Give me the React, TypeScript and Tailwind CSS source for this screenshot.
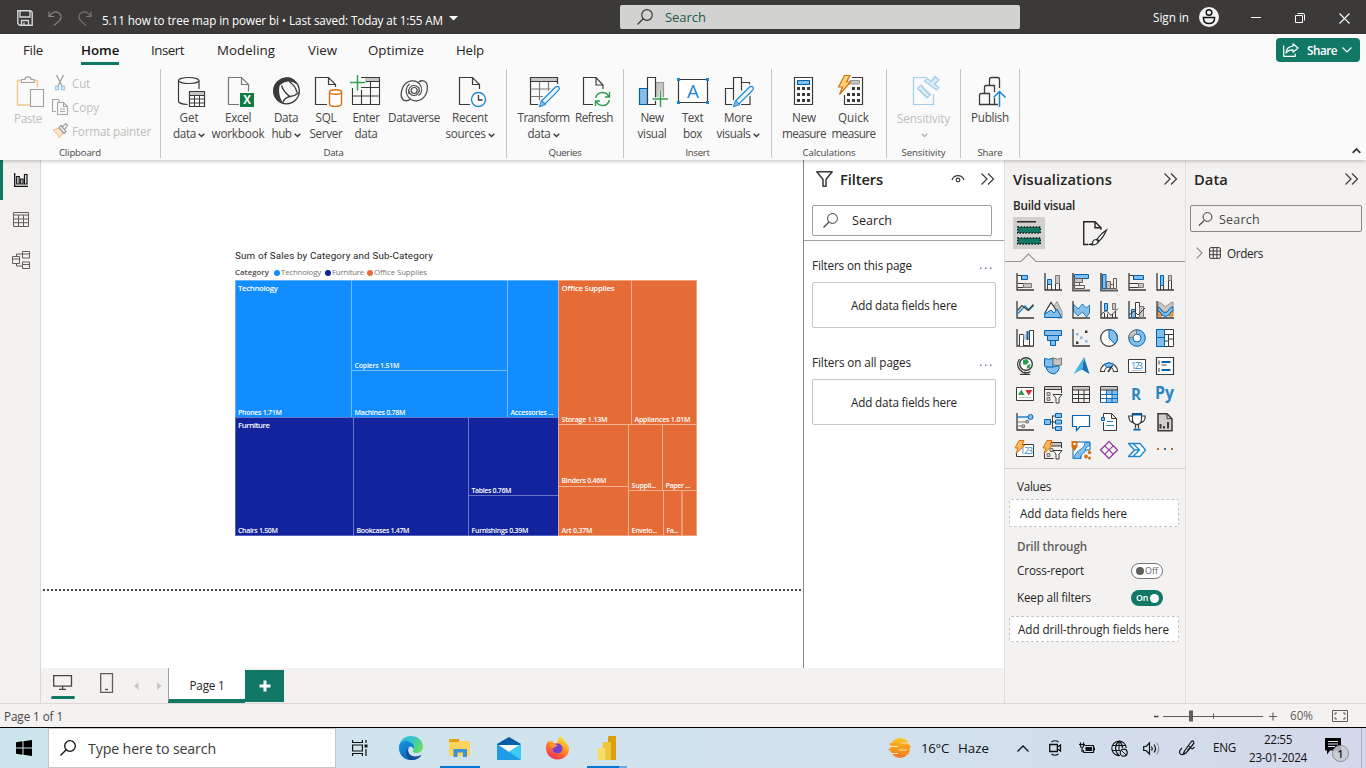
import { useLayoutEffect, useRef, useState } from "react";
import type { ReactNode } from "react";

/* A single line of text whose tracking is tuned so that it fills `w` pixels. */
function T({ w, className = "", children }: { w: number; className?: string; children: string }) {
  const ref = useRef<HTMLSpanElement>(null);
  const [ls, setLs] = useState(0);
  useLayoutEffect(() => {
    if (ref.current) {
      const n = ref.current.getBoundingClientRect().width;
      setLs((w - n) / children.length);
    }
  }, [w, children]);
  return (
    <span ref={ref} className={"inline-block shrink-0 whitespace-pre " + className} style={{ letterSpacing: ls + "px" }}>
      {children}
    </span>
  );
}

function Svg({ w, h, className = "", children }: { w: number; h: number; className?: string; children: ReactNode }) {
  return (
    <svg width={w} height={h} viewBox={`0 0 ${w} ${h}`} fill="none" className={"block shrink-0 overflow-visible " + className}>
      {children}
    </svg>
  );
}

const INK = "#3b3a39";
const BLUE = "#1b87d0";
const DB = "#0063b1";
const LB = "#83beec";
const GRAY = "#c8c6c4";
const GREEN = "#117865";

/* ---------- title bar ---------- */

function TitleBar() {
  return (
    <div className="flex h-[34px] shrink-0 items-center bg-[#3b3a39] text-white">
      <Svg w={16} h={16} className="ml-[17px] mt-[2px]">
        <path d="M.8.8h12.900l1.500 1.500v12.900H2.600L.8 13.500z" stroke="#d8d8d8" strokeWidth="1.400" />
        <path d="M3 1v6h10V1M4.500 15v-4.500h7V15M7 12.500V15" stroke="#d8d8d8" strokeWidth="1.300" />
      </Svg>
      <Svg w={14} h={16} className="ml-[15px] mt-[2px]">
        <path d="M1 1.500v5h5M1.300 6.200C4 2.500 7.300 1 10.200 2.400c3.400 1.800 4 5.400 1 8.400L6 15.500" stroke="#8a8886" strokeWidth="1.100" />
      </Svg>
      <Svg w={14} h={16} className="ml-[16px] mt-[2px]">
        <path d="M13 1.500v5H8M12.700 6.200C10 2.500 6.700 1 3.800 2.400c-3.400 1.800-4 5.400-1 8.400L8 15.500" stroke="#7a7876" strokeWidth="1.100" />
      </Svg>
      <T w={341} className="ml-[10px] mt-2 text-[11.700px]">5.11 how to tree map in power bi • Last saved: Today at 1:55 AM</T>
      <Svg w={10} h={6} className="ml-[6px] mt-1">
        <path d="M0 0h9L4.500 4.500z" fill="#fff" />
      </Svg>
      <div className="ml-[161px] flex h-6 w-[400px] items-center rounded-[2px] bg-[#d2d2d0]">
        <Svg w={16} h={16} className="ml-[17px]">
          <circle cx="10" cy="6" r="5.300" stroke={INK} strokeWidth="1.200" />
          <path d="M6.200 9.800L.5 15.500" stroke={INK} strokeWidth="1.300" />
        </Svg>
        <T w={41} className="ml-3 mt-[2px] text-[13px] text-[#1e5a4e]">Search</T>
      </div>
      <T w={36} className="ml-[133px] mt-[2px] text-[11.700px]">Sign in</T>
      <Svg w={20} h={20} className="ml-[10px]">
        <circle cx="10" cy="10" r="10" fill="#f3f2f1" />
        <circle cx="10" cy="5.500" r="2.800" stroke="#111" strokeWidth="1.400" />
        <path d="M4.500 10.500h11v1c0 3-2 5-5.500 5s-5.500-2-5.500-5z" stroke="#111" strokeWidth="1.500" />
      </Svg>
      <Svg w={10} h={10} className="ml-[32px]">
        <path d="M0 5.500h10" stroke="#fff" />
      </Svg>
      <Svg w={10} h={10} className="ml-[34px] mt-[2px]">
        <path d="M.5 2.500h7v7h-7zM2.500.5h5.500q1.500 0 1.500 1.500v5.500" stroke="#fff" />
      </Svg>
      <Svg w={11} h={11} className="ml-[34px] mt-[2px]">
        <path d="M.5.5l10 10M10.500.5l-10 10" stroke="#fff" strokeWidth="1.100" />
      </Svg>
    </div>
  );
}

function MenuTabs() {
  const tab = "mt-[2px] text-[13.300px] text-[#252423]";
  return (
    <div className="flex h-8 shrink-0 items-center">
      <T w={20} className={"ml-[23px] " + tab}>File</T>
      <div className="ml-[38px] flex h-8 w-[38px] flex-col pt-[6px]">
        <T w={38} className="text-[13.300px] font-semibold leading-5 text-[#111]">Home</T>
        <div className="mt-[2px] h-[3px] shrink-0 bg-[#117865]" />
      </div>
      <T w={33} className={"ml-[32px] " + tab}>Insert</T>
      <T w={58} className={"ml-[33px] " + tab}>Modeling</T>
      <T w={29} className={"ml-[33px] " + tab}>View</T>
      <T w={56} className={"ml-[31px] " + tab}>Optimize</T>
      <T w={28} className={"ml-[32px] " + tab}>Help</T>
      <div className="ml-auto mr-[6px] flex h-6 w-[84px] items-center rounded-[4px] bg-[#117865] text-white">
        <Svg w={16} h={14} className="ml-[7px]">
          <path d="M.7 2.500v10.800h11.500v-2.500M10 .8l5 4.200-5 4.200V6.900C7 6.800 5 7.500 3 10c.3-3.800 2.800-6.600 7-6.900z" stroke="#fff" strokeWidth="1.200" strokeLinejoin="round" />
        </Svg>
        <T w={30} className="ml-[8px] mt-[2px] text-[11.700px] font-semibold">Share</T>
        <Svg w={10} h={6} className="ml-[5px]">
          <path d="M.5.5L5 5 9.500.5" stroke="#fff" strokeWidth="1.200" />
        </Svg>
      </div>
    </div>
  );
}

/* ---------- ribbon icons ---------- */

const Pencil = () => (
  <g>
    <path d="M11 31l2-6.500L27.500 10q2-1.200 3.600.3t.4 3.700L17 28.500z" fill="#fafafa" stroke="#fafafa" strokeWidth="3" />
    <path d="M13.500 25L27.500 11q1.800-1.400 3.200 0t0 3.200L17 28z" fill="#e8f3fc" stroke={BLUE} strokeWidth="1.200" />
    <path d="M11.300 30.800l2.200-6.200 4 4z" fill={LB} stroke={BLUE} strokeWidth="1" />
  </g>
);

const icons: Record<string, ReactNode> = {
  getData: (
    <>
      <path d="M5.500 4.500v20.500c0 1.800 4 3.300 9 3.500M26 4.500V13" stroke={INK} strokeWidth="1.200" />
      <ellipse cx="15.700" cy="4.500" rx="10.200" ry="3" stroke={INK} strokeWidth="1.200" />
      <path d="M16.500 15.500h15v15h-15z" fill="#fff" stroke={INK} strokeWidth="1.200" />
      <path d="M17 16h14v3H17z" fill={GRAY} />
      <path d="M16.500 19.500h15M16.500 23h15M16.500 27h15M21.500 19.500v11M26.500 19.500v11" stroke={INK} />
    </>
  ),
  excel: (
    <>
      <path d="M17 28.500H6.500v-27h13l7 7v7M19.500 1.500v7h7" stroke="#797775" strokeWidth="1.200" />
      <path d="M18 17h14v14H18z" fill="#107c41" />
      <text x="25" y="28" fontSize="11.500" fontWeight="700" fill="#fff" textAnchor="middle">X</text>
    </>
  ),
  hub: (
    <>
      <circle cx="16.500" cy="15" r="12.800" stroke={INK} strokeWidth="1.300" />
      <path d="M8 5Q1.500 11 4 19q2.500 6.500 9 8-4-6-4-13Q9 9.500 11 7z" fill={INK} />
      <path d="M8.500 5.500Q13 .5 20 1.500q5 1.500 7 7-4-3.500-9-3-5 .5-7.500 3.500z" fill={INK} />
      <path d="M11.500 9.500q2 6.500 9 11.500M19 5.500q6.500 4 8 11M13 26.500q1-4.500 7-6 5-.5 9-4" stroke={INK} strokeWidth="1.300" />
    </>
  ),
  sql: (
    <>
      <path d="M17 28.500H5.500v-27h13l7 7V11M18.500 1.500v7h7" stroke={INK} strokeWidth="1.200" />
      <path d="M19.500 16v12c0 3.200 12 3.200 12 0V16" fill="#fff" stroke="#d6700f" strokeWidth="1.400" />
      <ellipse cx="25.500" cy="16" rx="6" ry="2.300" fill="#fff" stroke="#d6700f" strokeWidth="1.400" />
    </>
  ),
  enter: (
    <>
      <path d="M15 2h14.500v3.500H15z" fill={GRAY} />
      <path d="M2.500 12v16.500h27v-27H11M16 5.500h13.500M11 11.500h18.500M2.500 20h27M11.500 14v14.500M20.500 5.500v23" stroke={INK} strokeWidth="1.100" />
      <path d="M7.500-1v15.500M0 6.500h15.500" stroke="#33a351" strokeWidth="1.500" />
    </>
  ),
  dataverse: (
    <>
      <path d="M22 8.500C18 3 9 3.500 5 11c-3 6-2.500 12 1.500 13.500 2.500.8 4 0 5.500-1" stroke="#4a4846" strokeWidth="1.300" />
      <path d="M10 20.500c4 6 13 6 17.500-1.500 3-6 2.500-12.500-1.500-14-2.500-.8-4 0-5.500 1" stroke="#4a4846" strokeWidth="1.300" />
      <path d="M22 8.500c3 4 2 9-1.500 11M10 20.500c-3-4-2.500-9.500 1.500-12.500" stroke="#4a4846" strokeWidth="1.200" />
      <path d="M11 18c-1.500-5 1.500-9 5.500-8.500 3.500.5 5.500 3 5 6.500M21 11.500c1 4-1.500 8.500-5.500 8-3-.5-4.500-2.500-4.500-5" stroke="#4a4846" strokeWidth="1.100" />
      <circle cx="16.200" cy="14.500" r="3" stroke="#4a4846" strokeWidth="1.200" />
    </>
  ),
  recent: (
    <>
      <path d="M16 28.500H5.500v-27h13l7 7V13M18.500 1.500v7h7" stroke={INK} strokeWidth="1.200" />
      <circle cx="24.500" cy="23.500" r="7" fill="#fff" stroke={BLUE} strokeWidth="1.400" />
      <path d="M24.500 19v5h4" stroke={INK} strokeWidth="1.300" />
    </>
  ),
  transform: (
    <>
      <path d="M3 2h27v3.500H3z" fill={GRAY} />
      <path d="M13 28.500H2.500v-27h27V9M2.500 5.500h27" stroke={INK} strokeWidth="1.200" />
      <path d="M2.500 13h22M2.500 20.500h14M11.500 5.500v23M20.500 5.500V16" stroke="#797775" strokeWidth="1.100" />
      <Pencil />
    </>
  ),
  refresh: (
    <>
      <path d="M15 28.500H5.500v-27h12.500l7 7.500v4M18 1.500V9h7" stroke={INK} strokeWidth="1.200" />
      <path d="M17.500 22q1.500-5.500 7-5.500 4.500 0 6.500 4.500M31.500 16v5H27M31.500 24q-1.500 5.500-7 5.500-4.500 0-6.500-4.500M17.500 30v-5H22" stroke="#2f9a52" strokeWidth="1.400" />
    </>
  ),
  newVisual: (
    <>
      <path d="M3.500 12.500h8v16h-8z" fill={LB} stroke={DB} strokeWidth="1.200" />
      <path d="M19.500 6.500h8v17h-8z" fill={GRAY} stroke="#979593" strokeWidth="1.200" />
      <path d="M11.500 1.500h8v27h-8z" fill="#fff" stroke={INK} strokeWidth="1.200" />
      <path d="M24.500 15v16M16.500 23h15.500" stroke="#fafafa" strokeWidth="3.500" />
      <path d="M24.500 15v16M16.500 23h15.500" stroke="#33a351" strokeWidth="1.500" />
    </>
  ),
  textBox: (
    <>
      <path d="M1.500 3.500h29v23h-29z" fill="#fff" stroke={INK} strokeWidth="1.200" />
      <path d="M0 2h3v3H0zM29 2h3v3h-3zM0 25h3v3H0zM29 25h3v3h-3z" fill={BLUE} />
      <text x="16" y="22" fontSize="19" fill={BLUE} textAnchor="middle">A</text>
    </>
  ),
  moreVisuals: (
    <>
      <path d="M12 28.500H3.500v-16h8M11.500 24V1.500h8v13M19.500 6.500h8V11M28 20v8.500h-9" stroke={INK} strokeWidth="1.200" />
      <Pencil />
    </>
  ),
  calc: (
    <>
      <path d="M6.500 1.500h18v27h-18z" fill="#fff" stroke={INK} strokeWidth="1.200" />
      <path d="M9.500 4.500h12v4h-12z" fill={LB} stroke={DB} strokeWidth="1.200" />
      <path d="M9 11h3v3H9zm5 0h3v3h-3zm5 0h3v3h-3zM9 17h3v3H9zm5 0h3v3h-3zm5 0h3v3h-3zM9 23h3v3H9zm5 0h3v3h-3zm5 0h3v3h-3z" fill={INK} />
    </>
  ),
  quick: (
    <>
      <path d="M14 1.500h10.500v27h-18V19" fill="#fff" stroke={INK} strokeWidth="1.200" />
      <path d="M12 4.500h9.500v3.500H11z" fill={GRAY} stroke="#979593" />
      <path d="M14 11h3v3h-3zm5 0h3v3h-3zM9 17h3v3H9zm5 0h3v3h-3zm5 0h3v3h-3zM9 23h3v3H9zm5 0h3v3h-3zm5 0h3v3h-3z" fill={INK} />
      <path d="M6.500-.5h5.500L8.500 6h4L1.500 18.500 4.500 11H.5z" fill="#ffd479" stroke="#d6700f" strokeWidth="1.200" />
    </>
  ),
  sensitivity: (
    <>
      <path d="M19 1.500H5.500v27h20V18" stroke="#a5cde6" strokeWidth="1.200" />
      <path d="M9.500 12.500l3.500-3.500 9.500 9.500-3.500 3.500z" fill="#eaf4fa" stroke="#a5cde6" strokeWidth="1.200" />
      <path d="M11.500 13l8 8M13 11l8 8" stroke="#a5cde6" />
      <path d="M16.500 5l3-2.500 3.500 3 4-5L31 4l-4.500 4L31 11.500 28.500 14z" fill="#dcecf6" stroke="#a5cde6" strokeWidth="1.300" />
    </>
  ),
  publish: (
    <>
      <path d="M15.500 28.500H5.500v-9q0-2 2-2h8v11M10.500 17v-5.500q0-2 2-2h8V16M15.500 9V3.500q0-2 2-2h6q2 0 2 2V12M20.500 22v6.500h-5M20.500 28.500H24" stroke={INK} strokeWidth="1.300" />
      <path d="M25.500 31V16M19.500 21.500l6-6 6 6" stroke={BLUE} strokeWidth="1.500" />
    </>
  ),
};

function Chev({ light = false }: { light?: boolean }) {
  return (
    <Svg w={7} h={5} className="ml-[2px] mt-[2px]">
      <path d="M.7.7L3.500 3.500 6.300.7" stroke={light ? "#b3b0ad" : INK} strokeWidth="1.400" />
    </Svg>
  );
}

function Btn({ w, icon, a, b, chev = false }: { w: string; icon: string; a: [string, number]; b?: [string, number]; chev?: boolean }) {
  return (
    <div className={"flex shrink-0 flex-col items-center " + w}>
      <Svg w={32} h={32}>{icons[icon]}</Svg>
      <div className="mt-[2px] flex h-4 items-center justify-center">
        <T w={a[1]} className="text-[11.700px]">{a[0]}</T>
      </div>
      {b && (
        <div className="flex h-4 items-center justify-center">
          <T w={b[1]} className="text-[11.700px]">{b[0]}</T>
          {chev && <Chev />}
        </div>
      )}
    </div>
  );
}

function Group({ className, label, lw, children }: { className: string; label: string; lw: number; children: ReactNode }) {
  return (
    <div className={"flex h-[89px] shrink-0 flex-col border-r border-[#c8c6c4] pt-[7px] text-[#484644] " + className}>
      <div className="flex h-[72px] shrink-0">{children}</div>
      <div className="flex h-[11px] shrink-0 items-center justify-center">
        <T w={lw} className="text-[9.600px]">{label}</T>
      </div>
    </div>
  );
}

function Ribbon() {
  return (
    <div className="flex h-[94px] shrink-0 pt-[3px]">
      <Group className="w-[161px]" label="Clipboard" lw={42}>
        <div className="ml-[12px] flex w-8 flex-col items-center">
          <Svg w={32} h={32}>
            <path d="M9 4.500H5.500v24.500H18M22 4.500h3.500v7" stroke="#f5c88e" strokeWidth="1.400" />
            <path d="M9.500 6.500h12.500V3.500h-3c0-3.500-6-3.500-6 0h-3.500zM18.500 13.500h13v17h-13z" stroke="#a19f9d" strokeWidth="1.100" fill="#fafafa" />
          </Svg>
          <T w={28} className="mt-[2px] text-[11.700px] leading-4 text-[#c0bebc]">Paste</T>
        </div>
        <div className="ml-[8px] flex flex-col text-[#c0bebc]">
          <div className="mt-[-5px] flex h-6 items-center">
            <Svg w={16} h={16}>
              <path d="M4.500 0L10.500 12M11.500 0L5.500 12" stroke="#a19f9d" strokeWidth="1.300" />
              <path d="M3.500 11.500h3v3h-3zM9.500 11.500h3v3h-3z" stroke="#9ccbe8" strokeWidth="1.300" />
            </Svg>
            <T w={18} className="ml-1 mt-px text-[11.700px]">Cut</T>
          </div>
          <div className="flex h-6 items-center">
            <Svg w={16} h={16}>
              <path d="M4 12.500H.5V.5H6l2 2M5.500 3.500h6l4 4v8h-10zM11.500 3.500v4h4M8 10h5M8 12.500h5" stroke="#a8a6a4" strokeWidth="1.100" />
            </Svg>
            <T w={27} className="ml-1 mt-px text-[11.700px]">Copy</T>
          </div>
          <div className="flex h-6 items-center">
            <Svg w={16} h={16}>
              <path d="M1 7l6-2 4 5-4 5q-1-3-3-5z" fill="#fbe3c6" stroke="#f0c08a" />
              <path d="M7 4.500l2-2 5 6-2 2zM10.500 3.500L14 .5l1.500 1.500-2.500 4" stroke="#a19f9d" strokeWidth="1.200" fill="#fafafa" />
            </Svg>
            <T w={79} className="ml-1 mt-px text-[11.700px]">Format painter</T>
          </div>
        </div>
      </Group>
      <Group className="w-[346px]" label="Data" lw={20}>
        <Btn w="ml-[4px] w-[48px]" icon="getData" a={["Get", 19]} b={["data", 23]} chev />
        <Btn w="w-[50px]" icon="excel" a={["Excel", 26]} b={["workbook", 53]} />
        <Btn w="w-[46px]" icon="hub" a={["Data", 24]} b={["hub", 20]} chev />
        <Btn w="w-[34px]" icon="sql" a={["SQL", 21]} b={["Server", 33]} />
        <Btn w="w-[46px]" icon="enter" a={["Enter", 27]} b={["data", 23]} />
        <Btn w="w-[50px]" icon="dataverse" a={["Dataverse", 52]} />
        <Btn w="w-[62px]" icon="recent" a={["Recent", 36]} b={["sources", 40]} chev />
      </Group>
      <Group className="w-[117px]" label="Queries" lw={33}>
        <Btn w="ml-[10px] w-[53px]" icon="transform" a={["Transform", 52]} b={["data", 23]} chev />
        <Btn w="w-[48px]" icon="refresh" a={["Refresh", 38]} />
      </Group>
      <Group className="w-[148px]" label="Insert" lw={24}>
        <Btn w="ml-[10px] w-[36px]" icon="newVisual" a={["New", 23]} b={["visual", 29]} />
        <Btn w="w-[45px]" icon="textBox" a={["Text", 21]} b={["box", 19]} />
        <Btn w="w-[46px]" icon="moreVisuals" a={["More", 28]} b={["visuals", 34]} chev />
      </Group>
      <Group className="w-[115px]" label="Calculations" lw={53}>
        <Btn w="ml-[10px] w-[44px]" icon="calc" a={["New", 24]} b={["measure", 44]} />
        <Btn w="w-[55px]" icon="quick" a={["Quick", 31]} b={["measure", 44]} />
      </Group>
      <Group className="w-[74px]" label="Sensitivity" lw={44}>
        <div className="flex w-[73px] flex-col items-center">
          <Svg w={32} h={32}>{icons.sensitivity}</Svg>
          <T w={53} className="mt-[2px] text-[11.700px] leading-4 text-[#c0bebc]">Sensitivity</T>
          <div className="flex h-4 items-center">
            <Chev light />
          </div>
        </div>
      </Group>
      <Group className="w-[59px]" label="Share" lw={25}>
        <Btn w="w-[58px]" icon="publish" a={["Publish", 38]} />
      </Group>
      <Svg w={9} h={6} className="ml-auto mr-[5px] mt-[79px]">
        <path d="M.7 4.800L4.500 1l3.800 3.800" stroke={INK} strokeWidth="1.800" />
      </Svg>
    </div>
  );
}

/* ---------- left rail ---------- */

function Rail() {
  return (
    <div className="flex w-[41px] shrink-0 flex-col border-r border-[#dad9d7] bg-[#f3f2f1]">
      <div className="flex h-10 items-center border-l-[3px] border-[#117865]">
        <Svg w={14} h={14} className="ml-[11px]">
          <path d="M.7 0v13.300H14" stroke="#111" strokeWidth="1.300" />
          <path d="M2.700 3.500h2.500v7.500H2.700zM6.700 6h2.300v5H6.700zM10.500 1.500H13V11h-2.500z" stroke="#111" strokeWidth="1.200" />
        </Svg>
      </div>
      <div className="flex h-10 items-center">
        <Svg w={16} h={15} className="mb-[1px] ml-[13px]">
          <path d="M.5.5h15v14H.5zM.5 3h15M.5 7h15M.5 10.700h15M5.500 3v11.500M10.500 3v11.500" stroke="#605e5c" />
        </Svg>
      </div>
      <div className="flex h-10 items-center">
        <Svg w={18} h={18} className="ml-[12px]">
          <path d="M.5 5.500h7v7h-7zM.5 8h7M10.500.5h7V7h-7zM10.500 3h7M10.500 11h7v6.500h-7zM10.500 13.500h7M4.500 5.500V3h6M4.500 12.500V15h6" stroke="#605e5c" />
        </Svg>
      </div>
    </div>
  );
}

/* ---------- tree map ---------- */

const X0 = 235;
const Y0 = 280;
type Cell = [number, number, number, number, string, number];
const cells: { fill: string; line: string; box: number[]; title: string; tw: number; items: Cell[] }[] = [
  {
    fill: "#118dff", line: "#7fc0fb", box: [235, 280, 558.5, 417.5], title: "Technology", tw: 40,
    items: [
      [235, 280, 351.5, 417.5, "Phones 1.71M", 44],
      [351.5, 280, 507.5, 370.5, "Copiers 1.51M", 45],
      [351.5, 370.5, 507.5, 417.5, "Machines 0.78M", 51],
      [507.5, 280, 558.5, 417.5, "Accessories ...", 43],
    ],
  },
  {
    fill: "#12239e", line: "#6f7ac4", box: [235, 417.5, 558.5, 536], title: "Furniture", tw: 32,
    items: [
      [235, 417.5, 353.5, 536, "Chairs 1.50M", 40],
      [353.5, 417.5, 468.5, 536, "Bookcases 1.47M", 53],
      [468.5, 417.5, 558.5, 495.5, "Tables 0.76M", 40],
      [468.5, 495.5, 558.5, 536, "Furnishings 0.39M", 57],
    ],
  },
  {
    fill: "#e66c37", line: "#f3b698", box: [558.5, 280, 697, 536], title: "Office Supplies", tw: 53,
    items: [
      [558.5, 280, 631.5, 424.5, "Storage 1.13M", 46],
      [631.5, 280, 697, 424.5, "Appliances 1.01M", 56],
      [558.5, 424.5, 628.5, 486.5, "Binders 0.46M", 45],
      [558.5, 486.5, 628.5, 536, "Art 0.37M", 31],
      [628.5, 424.5, 662.5, 490.5, "Suppli...", 25],
      [662.5, 424.5, 697, 490.5, "Paper ...", 25],
      [628.5, 490.5, 663.5, 536, "Envelo...", 26],
      [663.5, 490.5, 682, 536, "Fa...", 12],
      [682, 490.5, 697, 536, "", 0],
    ],
  },
];

function TreeMap() {
  return (
    <div className="ml-[194px] mt-[88px] flex w-[462px] flex-col">
      <div className="flex h-4 items-center">
        <T w={198} className="font-['Roboto','Open_Sans',sans-serif] text-[9.800px] text-[#252423]">Sum of Sales by Category and Sub-Category</T>
      </div>
      <div className="flex h-4 items-center pt-px text-[7.800px] text-[#777572]">
        <T w={34} className="font-semibold text-[#484644]">Category</T>
        <span className="ml-[5px] mr-[1px] size-[6px] rounded-full bg-[#118dff]" />
        <T w={40}>Technology</T>
        <span className="ml-[4px] mr-[1px] size-[6px] rounded-full bg-[#12239e]" />
        <T w={32}>Furniture</T>
        <span className="ml-[3px] mr-[1px] size-[6px] rounded-full bg-[#e66c37]" />
        <T w={53}>Office Supplies</T>
      </div>
      <Svg w={462} h={256}>
        {cells.map((g) => (
          <g key={g.title}>
            <rect x={g.box[0] - X0} y={g.box[1] - Y0} width={g.box[2] - g.box[0]} height={g.box[3] - g.box[1]} fill={g.fill} />
            {g.items.map(([x1, y1, x2, y2, name, tw], i) => (
              <g key={i}>
                <rect x={Math.max(0.5, x1 - X0)} y={Math.max(0.5, y1 - Y0)} width={Math.min(x2, 696.5) - Math.max(x1, 235.5)} height={Math.min(y2, 535.5) - Math.max(y1, 280.5)} stroke={g.line} strokeOpacity=".75" />
                {name && (
                  <text x={Math.max(3, x1 - X0 + 3)} y={y2 - Y0 - (y2 === 536 ? 2.700 : y2 === 486.5 ? 3.600 : 3)} fontSize="7" fontWeight="600" fill="#fff" textLength={tw}>
                    {name}
                  </text>
                )}
              </g>
            ))}
            <text x={g.box[0] - X0 + 3} y={g.box[1] - Y0 + 10.700} fontSize="7.800" fontWeight="600" fill="#fff" textLength={g.tw}>
              {g.title}
            </text>
          </g>
        ))}
      </Svg>
    </div>
  );
}

function PageBar() {
  return (
    <div className="flex h-[35px] shrink-0 bg-[#f3f2f1]">
      <div className="ml-[10px] flex w-6 flex-col items-center pt-[7px]">
        <Svg w={20} h={15}>
          <path d="M.7.7h17.800v10.500H.7zM9.600 11.500V14M6 14.300h7" stroke="#484644" strokeWidth="1.300" />
        </Svg>
        <div className="mt-[6px] h-[3px] w-6 rounded-full bg-[#117865]" />
      </div>
      <Svg w={14} h={20} className="ml-[25px] mt-[5px]">
        <path d="M.7.7h11.800v18.600H.7zM5 16.500h3" stroke="#605e5c" strokeWidth="1.300" />
      </Svg>
      <Svg w={5} h={8} className="ml-[20px] mt-[14px]">
        <path d="M4.500 0v8L0 4z" fill="#c8c6c4" />
      </Svg>
      <Svg w={5} h={8} className="ml-[18px] mt-[14px]">
        <path d="M0 0v8l4.500-4z" fill="#c8c6c4" />
      </Svg>
      <div className="ml-[6px] flex w-[77px] items-center justify-center border-b-4 border-l border-b-[#117865] border-l-[#a19f9d] bg-white pt-[5px]">
        <T w={35} className="text-[11.700px] font-medium text-[#252423]">Page 1</T>
      </div>
      <div className="mt-[2px] flex h-8 w-[39px] items-center justify-center bg-[#117865]">
        <Svg w={12} h={12}>
          <path d="M6 .5v11M.5 6h11" stroke="#fff" strokeWidth="3" />
        </Svg>
      </div>
    </div>
  );
}

/* ---------- side panes ---------- */

function Collapse({ className }: { className: string }) {
  return (
    <Svg w={13} h={12} className={"mb-[3px] " + className}>
      <path d="M.5.5L6 6 .5 11.500M7 .5L12.500 6 7 11.500" stroke={INK} strokeWidth="1.200" />
    </Svg>
  );
}

function Magnifier() {
  return (
    <Svg w={15} h={15}>
      <circle cx="9.500" cy="5.500" r="4.900" stroke={INK} />
      <path d="M6 9L.5 14.500" stroke={INK} strokeWidth="1.100" />
    </Svg>
  );
}

function FilterCard({ label, w }: { label: string; w: number }) {
  return (
    <div>
      <div className="flex h-[16px] items-center justify-between">
        <T w={w} className="text-[11.700px]">{label}</T>
        <Svg w={12} h={3} className="mr-[4px] mt-1">
          <path d="M0 .5h1.500v1.500H0zM5 .5h1.500v1.500H5zM10 .5h1.500v1.500H10z" fill="#6d7f99" />
        </Svg>
      </div>
      <div className="mt-[8px] flex h-[46px] items-center justify-center rounded-[2px] border border-[#c8c6c4] pt-[2px]">
        <T w={106} className="text-[11.700px]">Add data fields here</T>
      </div>
    </div>
  );
}

function FiltersPane() {
  return (
    <div className="flex w-[201px] shrink-0 flex-col border-l border-[#8a8886] bg-white text-[#252423]">
      <div className="flex h-10 items-center">
        <Svg w={17} h={16} className="mb-[2px] ml-[12px]">
          <path d="M.8.8h15.400L10 8.500v6.700H7V8.500z" stroke={INK} strokeWidth="1.500" strokeLinejoin="round" />
        </Svg>
        <T w={43} className="mb-[2px] ml-[7px] text-[14.700px] font-semibold">Filters</T>
        <Svg w={14} h={9} className="mb-[4px] ml-[68px]">
          <path d="M1 6C3 .2 11 .2 13 6" stroke={INK} strokeWidth="1.200" />
          <circle cx="7" cy="6" r="1.800" stroke={INK} strokeWidth="1.200" />
        </Svg>
        <Collapse className="ml-[16px]" />
      </div>
      <div className="ml-[8px] mt-[5px] flex h-[31px] w-[180px] items-center rounded-[2px] border border-[#a19f9d] pl-[10px]">
        <Magnifier />
        <T w={40} className="ml-[14px] mt-px text-[12.500px]">Search</T>
      </div>
      <div className="mt-[4px] h-px bg-[#a19f9d]" />
      <div className="ml-[8px] mt-[17px] flex w-[184px] flex-col gap-[27px]">
        <FilterCard label="Filters on this page" w={100} />
        <FilterCard label="Filters on all pages" w={99} />
      </div>
    </div>
  );
}

const axis = <path d="M1 0v17h17" stroke={INK} strokeWidth="1.300" />;
const bolt = <path d="M3-.5h5L6 4h3L0 12.500 2 7-1 7z" fill="#ffb95a" stroke="#d6700f" />;

const vizIcons: ReactNode[] = [
  <>{axis}<path d="M5.500 2.500h6v4h-6z" fill={LB} stroke={DB} /><path d="M1.500 2.500h4v4M1.500 10.500h6v4h-6" stroke={INK} /><path d="M7.500 10.500h8v4h-8z" fill={GRAY} stroke="#797775" /></>,
  <>{axis}<path d="M3.500 6.500h4v5h-4z" fill={LB} stroke={DB} /><path d="M3.500 11.500V17M7.500 11.500V17M11.500 10.500h4V17M11.500 10.500V17" stroke={INK} /><path d="M11.500 2.500h4v8h-4z" fill={GRAY} stroke="#797775" /></>,
  <><path d="M1 0v17.500h17" stroke="#605e5c" strokeWidth="1.800" /><path d="M2.500 1.500h14v4h-14z" fill={LB} stroke={DB} /><path d="M2.500 5.500h8v4h-8z" fill={GRAY} stroke="#605e5c" /><path d="M2.500 9.500h5v3h-5zM2.500 12.500h10v3h-10z" stroke="#605e5c" fill="#f3f2f1" /></>,
  <><path d="M1 0v17.500h17" stroke="#605e5c" strokeWidth="1.800" /><path d="M2.500 1.500h3.500v14H2.500z" fill={LB} stroke={DB} /><path d="M6.500 8.500h4v7h-4z" fill={GRAY} stroke="#605e5c" /><path d="M10.500 11.500h3v4h-3zM13.500 5.500h3v10h-3z" fill="#f3f2f1" stroke="#605e5c" /></>,
  <>{axis}<path d="M5.500 2.500h10v4h-10z" fill={LB} stroke={DB} /><path d="M1.500 2.500h4v4M1.500 10.500h9v4h-9" stroke={INK} /><path d="M10.500 10.500h5v4h-5z" fill={GRAY} stroke="#797775" /></>,
  <>{axis}<path d="M4.500 2.500h3v10h-3z" fill={LB} stroke={DB} /><path d="M4.500 12.500V17M7.500 12.500V17M12.500 7V17M15.500 7V17" stroke={INK} /><path d="M12.500 2.500h3v5h-3z" fill={GRAY} stroke="#797775" /></>,
  <>{axis}<path d="M1.500 13L9 5l4 4 4.500-4.500" stroke={BLUE} strokeWidth="1.400" /><path d="M1.500 9.500L6 4.500l6 5 5.500-6" stroke={INK} strokeWidth="1.200" /></>,
  <><path d="M9 7l4-6.500 5 10v6.500h-4z" fill={GRAY} stroke="#979593" /><path d="M.5 12.500L7 1.500l6 9" fill="#fff" stroke={INK} strokeWidth="1.200" /><path d="M.7 16.500V13L7 9l3 3 3-4 4.500 8.500z" fill={LB} stroke={DB} /></>,
  <><path d="M1.500 3l4.500 5 4.500-5 4 4 3-3v8l-3 4-4-5-4.500 4-4.500-5z" fill={LB} stroke={DB} strokeWidth=".8" />{axis}</>,
  <>{axis}<path d="M4.500 2.500h3v7h-3z" fill={LB} stroke={DB} /><path d="M12.500 2.500h3v6h-3z" fill={GRAY} stroke="#797775" /><path d="M4.500 12V17M7.500 13V17M12.500 13V17M15.500 10V17M1 13.500l5-4 5 5 7-7" stroke={INK} /></>,
  <>{axis}<path d="M3.500 8.500h4v8h-4z" fill={LB} stroke={DB} /><path d="M7.500 1.500h4v15h-4z" fill="#fff" stroke={INK} /><path d="M11.500 5.500h4v11h-4z" fill={GRAY} stroke="#797775" /><path d="M1 14l5-4 4 4 7-7" stroke={INK} /></>,
  <><path d="M2 1q3 0 5 3t5 0 5-3v6q-2 0-4 3-4 2-7 0-2-3-4-3z" fill={GRAY} stroke="#979593" /><path d="M2 9h4v6H2zM13 9h4v6h-4z" fill="#f2a24e" stroke="#d6700f" /><path d="M2 6q2 0 4 4 3 4 6 0 3-5 5-4v4q-2 0-4 4-4 3-7 0-2-4-4-4z" fill={LB} stroke={DB} />{axis}</>,
  <>{axis}<path d="M3.500 17V5.500h4V17M7.500 12.500v4h4M13.500 10V1.500h4V17h-4z" stroke={INK} fill="#fff" /><path d="M7.500 5.500h3v5h-3z" fill={GRAY} /><path d="M11.500 2v9" stroke={DB} strokeWidth="2" /></>,
  <><path d="M.5 1.500h17v5H.5zM3.500 6.500h11v5h-11zM6.500 11.500h5v5h-5z" fill={LB} stroke={DB} /></>,
  <>{axis}<path d="M4 4h2.500v2.500H4zM8 7.500h2.500V10H8zM13 11h2.500v2.500H13z" fill={LB} /><path d="M13 1.500h2.500V4H13zM4 12.500h2.500V15H4z" fill={INK} /></>,
  <><circle cx="9" cy="9" r="8.300" fill="#fff" stroke={INK} strokeWidth="1.200" /><path d="M9 9V.7a8.300 8.300 0 0 1 5.800 14.300z" fill={LB} stroke={DB} /></>,
  <><circle cx="9" cy="9" r="6.200" stroke={LB} strokeWidth="4" /><circle cx="9" cy="9" r="8.300" stroke={DB} /><circle cx="9" cy="9" r="4" stroke={DB} fill="#fff" /><path d="M.8 8.500Q1 2.500 8.500.7V5Q5 6 5 8.500z" fill={GRAY} stroke="#797775" /></>,
  <><path d="M.5.5h17v17H.5z" fill="#fff" stroke={INK} /><path d="M.5.5h8v17h-8z" fill={LB} stroke={DB} /><path d="M.5 8.500h8" stroke={DB} /><path d="M8.500 5.500h9M12.500 5.500v12M8.500 12h4M12.500 10h5" stroke={INK} /></>,
  <><circle cx="10" cy="7" r="6.300" stroke={INK} strokeWidth="1.400" fill="#fff" /><path d="M7 3l4-1 2 3-3 3-3-1zM11.500 8l3-1-1 4-3 .5z" fill="#2f9a52" /><path d="M3.500 2Q-.5 8 4 13t10.500 1.500M9 14.500v2.500M4 17.300h10" stroke={INK} strokeWidth="1.200" /></>,
  <><path d="M.5 1.500q4 2 8.500-.5v8L6 12 .5 9z" fill={LB} stroke={DB} /><path d="M9 1q5 2.500 8.500 0V8q-4 1-8.500 0z" fill={GRAY} stroke="#797775" /><path d="M2 10h7l6-1.500q1 6-5 8.500-7-1-8-7z" fill={LB} stroke={DB} /></>,
  <><path d="M12 0l5.500 17-7.500-4.500z" fill="#1670b8" /><path d="M12 0L1.500 17l8.500-4.500z" fill="#45b5df" /></>,
  <><path d="M2.200 14.500a6.800 6.800 0 0 1 13.600 0" stroke="#fff" strokeWidth="3" /><path d="M.5 14.500a8.500 8.500 0 0 1 17 0h-4a4.500 4.500 0 0 0-9 0z" stroke={INK} strokeWidth="1.100" /><path d="M4.500 7.200a8.500 8.500 0 0 1 9 0l-2.200 3.400a4.500 4.500 0 0 0-4.600 0z" fill={LB} stroke={DB} /><path d="M8 15l4-6" stroke={INK} strokeWidth="1.500" /></>,
  <><path d="M.5 2.500h17v13H.5z" fill="#fff" stroke={INK} /><text x="9" y="11.500" fontSize="9" fill={BLUE} textAnchor="middle" textLength="12">123</text><path d="M4 13.500h10" stroke={GRAY} /></>,
  <><path d="M.5.5h17v17H.5z" fill="#fff" stroke={INK} strokeWidth="1.200" /><path d="M5.500 5h9M5.500 13h9" stroke={DB} strokeWidth="1.800" /><path d="M3 3.500v4M3 11v4M5.500 8h5" stroke={INK} /></>,
  <><path d="M.5 2.500h17v13H.5z" fill="#fff" stroke={INK} /><path d="M2 10L5.300 4.500 8.700 10z" fill="#2f9a52" /><path d="M9.300 5h7L12.800 10.500z" fill="#d92c2c" /><path d="M3 12.500h12" stroke={GRAY} /></>,
  <><path d="M.5 1.500h17v3H.5z" fill={GRAY} /><path d="M17.500 8V1.500H.5v16h9M.5 4.500h17" stroke={INK} /><path d="M3 7.500h3v3H3zM3 12.500h3v3H3z" stroke="#797775" fill={GRAY} /><path d="M9 9.500h9l-3 3.500v5h-3v-5z" fill="#fff" stroke={INK} /></>,
  <><path d="M1 2h16v3H1z" fill={GRAY} /><path d="M.5 1.500h17v16H.5zM.5 5h17M.5 9.500h17M.5 13.500h17M6.500 5v12.500M12 5v12.500" stroke={INK} /></>,
  <><path d="M.5 1.500h17v16H.5z" fill="#fff" /><path d="M6.500 5h11v4.500h-11zM12 9.500h5.500v8H12zM6.500 13.500H12v4H6.500z" fill={LB} /><path d="M1 2h16v3H1z" fill={GRAY} /><path d="M.5 17.500V1.500h17V5H.5" stroke={INK} /><path d="M.5 9.500h17M.5 13.500h17M6.500 5v12.500M12 5v12.500M17.500 5v12.500H.5" stroke={DB} strokeWidth=".9" /></>,
  <><text x="3" y="15" fontSize="16.500" fontWeight="700" fill="#2a86c4" textLength="10" lengthAdjust="spacingAndGlyphs">R</text></>,
  <><text x="-1" y="14" fontSize="17" fontWeight="700" fill="#2a86c4" textLength="19" lengthAdjust="spacingAndGlyphs">Py</text></>,
  <><path d="M1 0v17h17" stroke={INK} strokeWidth="1.300" /><path d="M1 4h12" stroke={BLUE} strokeWidth="1.500" /><circle cx="14.500" cy="4" r="2.500" fill={LB} stroke={DB} /><path d="M1 9h10M1 13h6" stroke="#797775" /><path d="M10 7.500h2.500V10H10zM6 12h2.500v2.500H6z" fill={GRAY} stroke="#797775" /></>,
  <><path d="M6 9h5M8.500 2.500v13M8.500 3h3M8.500 15h3" stroke={INK} /><path d="M.5 6.500h6v5h-6zM11.500.5h6v4h-6zM11.500 7h6v4h-6zM11.500 13.500h6v4h-6z" fill={LB} stroke={DB} /></>,
  <><path d="M.5 2.500h17v11H8l-3.500 4v-4h-4z" fill="#fff" stroke={DB} strokeWidth="1.200" /></>,
  <><path d="M3.500 4V.5h8l5 5v12h-13V9M11.500.5v5h5" fill="#fff" stroke={INK} /><path d="M1.500 4.500h3v3h-3z" fill={LB} stroke={DB} /><path d="M7 8.500h6M6 12.500h8" stroke={BLUE} /></>,
  <><path d="M4.500 3H.7q.3 6.500 5 6.500M13.500 3h3.800q-.3 6.500-5 6.500M4.500.7h9v6q0 4-4.500 5-4.500-1-4.500-5zM7.500 11.500v4M10.500 11.500v4" stroke={INK} strokeWidth="1.200" fill="#fff" /><path d="M5 1.500h8M5.500 16.700h7" stroke={DB} strokeWidth="1.800" /></>,
  <><path d="M2 .7h9l5 5v12H2z" fill="#d2d0ce" stroke={INK} strokeWidth="1.500" /><path d="M11 .7v5h5" stroke={INK} /><path d="M4.500 11v4.500M8 13v2.500M12 9v6.500" stroke={INK} strokeWidth="2" /></>,
  <><path d="M6 3.500h11.500v12H.5V11" stroke={INK} fill="#fff" /><text x="10.500" y="13" fontSize="9" fill={BLUE} textAnchor="middle" textLength="13">123</text>{bolt}</>,
  <><path d="M5 2h12.500v3H5z" fill={GRAY} /><path d="M17.500 7V1.500H5M.5 10v7.500h9M4 5h13.500" stroke={INK} /><path d="M3 12.500h3v3H3zM6 7.500h3v3H6z" stroke="#797775" fill={GRAY} /><path d="M9 9.500h9l-3 3.500v5h-3v-5z" fill="#fff" stroke={INK} />{bolt}</>,
  <><path d="M1 1h17v8H9v8.500H1z" fill="#fff" stroke={DB} /><path d="M17.500 1.500H13Q13 6 9 8t-6 6l-1.500 3.500H8q0-3 3-5t3-6q2-1 3.500-2z" fill={LB} stroke={BLUE} /><path d="M-.5 0h6v6L2.500 10-.5 6z" fill="#d6700f" /><circle cx="2.500" cy="3" r="1.200" fill="#fff" /><circle cx="14" cy="15.500" r="2" fill="#d6700f" /><circle cx="17.500" cy="11.500" r="1.700" fill="#d6700f" /><circle cx="17.500" cy="17" r="1.500" fill="#d6700f" /></>,
  <><path d="M9 .5L17.500 9 9 17.500.5 9zM4.800 4.800l8.400 8.400M13.200 4.800l-8.400 8.400" stroke="#8f3a9c" strokeWidth="1.200" strokeLinejoin="round" /></>,
  <><path d="M.5 2.500H12L17.500 9 12 15.500H.5L6.500 9zM5 2.500L11.500 9 5 15.500M11.500 9h-5" stroke={BLUE} strokeWidth="1.300" fill="#fff" strokeLinejoin="round" /></>,
  <><path d="M1 7h2v2H1z" fill="#d6700f" /><path d="M8 7h2v2H8z" fill="#4a6a8a" /><path d="M15 7h2v2h-2z" fill="#a0703a" /></>,
];

function Toggle({ on }: { on: boolean }) {
  return on ? (
    <span className="flex h-4 w-8 items-center rounded-full bg-[#117865] pl-[5px]">
      <T w={12} className="mt-px text-[8.800px] font-semibold text-white">On</T>
      <span className="ml-[2px] size-[9px] rounded-full bg-white" />
    </span>
  ) : (
    <span className="flex h-4 w-8 items-center rounded-full border border-[#797775] bg-white pl-[4px]">
      <span className="mr-[1px] size-[8px] rounded-full bg-[#605e5c]" />
      <T w={13} className="mt-px text-[8.800px] text-[#605e5c]">Off</T>
    </span>
  );
}

function VisualizationsPane() {
  return (
    <div className="flex w-[182px] shrink-0 flex-col border-l border-r border-[#e1dfdd] bg-[#f3f2f1] text-[#252423]">
      <div className="flex h-10 items-center pl-[8px]">
        <T w={99} className="mb-[2px] text-[14.700px] font-semibold">Visualizations</T>
        <Collapse className="ml-[52px]" />
      </div>
      <div className="flex h-3 items-center pl-[8px]">
        <T w={62} className="text-[11.700px] font-semibold">Build visual</T>
      </div>
      <div className="mt-[5px] flex h-8 items-center pl-[8px]">
        <div className="flex size-8 items-center justify-center bg-[#d2d0ce]">
          <Svg w={24} h={24}>
            <path d="M0 .8h19" stroke="#111" strokeWidth="1.300" />
            <path d="M.7 6h22.600v6H.7zM.7 17h22.600v6H.7z" fill={GREEN} stroke="#111" strokeWidth="1.400" strokeDasharray="1.500 1.500" />
          </Svg>
        </div>
        <Svg w={24} h={24} className="ml-[38px]">
          <path d="M5 23.500H.7V.7H12l6 6v2M12 .7v6h6" stroke="#252423" strokeWidth="1.400" />
          <path d="M23.500 9q-5 3-9.500 9l2 2q4-3 7.500-11zM13.500 18.500q-4 0-4 4l-3 1q6 1.500 9-2.500z" fill="#fff" stroke="#252423" strokeWidth="1.200" />
        </Svg>
      </div>
      <Svg w={180} h={9} className="mt-[4px]">
        <path d="M0 8.500h16l7.500-7.500 7.500 7.500h149" stroke="#979593" strokeWidth="1.100" />
      </Svg>
      <div className="ml-[11px] mt-[11px] grid w-[158px] grid-cols-6 gap-[10px]">
        {vizIcons.map((ic, i) => (
          <Svg key={i} w={18} h={18}>{ic}</Svg>
        ))}
      </div>
      <div className="mt-[9px] h-px bg-[#d2d0ce]" />
      <div className="mt-[9px] flex h-4 items-center pl-[12px]">
        <T w={34} className="mt-px text-[11.700px]">Values</T>
      </div>
      <div className="ml-[4px] mt-[5px] flex h-7 w-[170px] items-center rounded-[2px] border border-dashed border-[#c8c6c4] bg-white pl-[10px] pt-[2px]">
        <T w={107} className="text-[11.700px]">Add data fields here</T>
      </div>
      <div className="mt-[11px] flex h-4 items-center pl-[12px]">
        <T w={70} className="mt-px text-[11.700px] font-semibold text-[#605e5c]">Drill through</T>
      </div>
      <div className="mt-[9px] flex h-4 items-center justify-between pl-[12px] pr-[22px]">
        <T w={67} className="text-[11.700px]">Cross-report</T>
        <Toggle on={false} />
      </div>
      <div className="mt-[11px] flex h-4 items-center justify-between pl-[12px] pr-[22px]">
        <T w={74} className="text-[11.700px]">Keep all filters</T>
        <Toggle on />
      </div>
      <div className="ml-[4px] mt-[10px] flex h-[26px] w-[170px] items-center rounded-[2px] border border-dashed border-[#c8c6c4] bg-white pl-[8px] pt-[2px]">
        <T w={151} className="text-[11.700px]">Add drill-through fields here</T>
      </div>
    </div>
  );
}

function DataPane() {
  return (
    <div className="flex flex-1 flex-col bg-[#f3f2f1] text-[#252423]">
      <div className="flex h-10 items-center pl-[8px]">
        <T w={34} className="mb-[2px] text-[14.700px] font-semibold">Data</T>
        <Collapse className="ml-[117px]" />
      </div>
      <div className="ml-[4px] mt-[5px] flex h-[27px] w-[172px] items-center rounded-[2px] border border-[#8a8886] pl-[7px]">
        <Svg w={15} h={14}>
          <circle cx="9.500" cy="5" r="4.400" stroke={INK} />
          <path d="M6.300 8.300L1 13.500" stroke={INK} strokeWidth="1.100" />
        </Svg>
        <T w={41} className="ml-[6px] mt-[3px] text-[12.500px] text-[#484644]">Search</T>
      </div>
      <div className="mt-[13px] flex h-4 items-center">
        <Svg w={7} h={12} className="ml-[10px]">
          <path d="M.7.7L6 6 .7 11.300" stroke="#8a8886" strokeWidth="1.100" />
        </Svg>
        <Svg w={12} h={12} className="ml-[6px]">
          <path d="M2 .6h8q1.400 0 1.400 1.400v8q0 1.400-1.400 1.400H2Q.6 11.400.6 10V2Q.6.600 2 .600zM.6 4h11M.6 7.700h11M4.300.6v11M7.900.6v11" stroke={INK} />
        </Svg>
        <T w={36} className="ml-[6px] mt-[2px] text-[11.700px]">Orders</T>
      </div>
    </div>
  );
}

function StatusBar() {
  return (
    <div className="flex h-[25px] shrink-0 items-center border-b border-t border-b-black border-t-[#dad9d7] bg-[#f3f2f1] text-[#484644]">
      <T w={59} className="ml-[4px] mt-[3px] text-[11.700px]">Page 1 of 1</T>
      <Svg w={124} h={12} className="ml-auto">
        <path d="M0 6.500h4.500" stroke="#484644" strokeWidth="1.500" />
        <path d="M9 6.500h100M59.500 3.500v5M115 6.500h8M119 2.500v8" stroke="#605e5c" strokeWidth="1.100" />
        <path d="M35 .5h4v11h-4z" fill="#605e5c" />
      </Svg>
      <T w={23} className="ml-[12px] mt-px text-[11.700px] text-[#605e5c]">60%</T>
      <Svg w={16} h={12} className="ml-[19px] mr-[18px]">
        <path d="M.5.5h15v11H.5z" stroke="#605e5c" />
        <path d="M5 3H3v2M11 3h2v2M5 9H3V7M11 9h2V7" stroke="#605e5c" />
      </Svg>
    </div>
  );
}

/* ---------- taskbar ---------- */

function Taskbar() {
  return (
    <div className="flex h-10 shrink-0 items-center bg-linear-to-r from-[#cde5ec] via-[#d1e3ee] to-[#d3d9ea] text-[#111]">
      <Svg w={16} h={16} className="ml-[16px]">
        <path d="M0 2.200l6.500-.9v6.200H0zM7.500 1.200L16 0v7.500H7.500zM0 8.500h6.500v6.200L0 13.800zM7.500 8.500H16V16l-8.500-1.200z" fill="#000" />
      </Svg>
      <div className="ml-[16px] flex h-10 w-[288px] items-center border border-[#c0c8cc] bg-white">
        <Svg w={16} h={16} className="ml-[11px]">
          <circle cx="10" cy="6" r="5.300" stroke="#111" strokeWidth="1.300" />
          <path d="M6.200 9.800L.5 15.500" stroke="#111" strokeWidth="1.300" />
        </Svg>
        <T w={128} className="ml-[12px] mt-[2px] text-[14.200px] text-[#3a3a3a]">Type here to search</T>
      </div>
      <Svg w={16} h={16} className="ml-[16px]">
        <path d="M.6 0v2.500h9.800V0M.6 16v-2.500h9.800V16M.6 5h9.800v6H.6zM14 0v3M14 9v7" stroke="#111" strokeWidth="1.200" />
        <path d="M12.500 4.500h3v3h-3z" fill="#111" />
      </Svg>
      <Svg w={24} h={24} className="ml-[31px]">
        <defs>
          <linearGradient id="edgeA" x1="0" y1="0" x2="24" y2="12" gradientUnits="userSpaceOnUse">
            <stop stopColor="#2ab4e8" /><stop offset=".55" stopColor="#35c8c0" /><stop offset="1" stopColor="#6fe05a" />
          </linearGradient>
          <linearGradient id="edgeB" x1="0" y1="8" x2="10" y2="24" gradientUnits="userSpaceOnUse">
            <stop stopColor="#1490e0" /><stop offset="1" stopColor="#0c62b8" />
          </linearGradient>
        </defs>
        <path d="M0 12C0 4 6 0 12 0c7 0 12 5 12 10.500 0 4-3 6.500-6.500 6.500-3 0-4.500-1-3.500-2.500 1.500-3-.5-5.500-4-5.500z" fill="url(#edgeA)" />
        <path d="M0 12c0-5 5-8 9.500-6.500C14 7 15.500 10 14.500 13c-1-3-4-3.500-5-1-1.500 4 2 9.500 6 11Q12 24.500 9 23.700C4 22.500 0 18 0 12z" fill="url(#edgeB)" />
        <path d="M9.500 12c-2 4 1.500 8.500 7 8.500 3 0 5-1.500 6-1.500-1.500 3-6 5.500-10.500 5-4.500-1-7-8-2.500-12z" fill="#144c9c" />
      </Svg>
      <div className="ml-[17px] flex h-10 w-10 flex-col items-center justify-between pt-[10px]">
        <Svg w={22} h={19}>
          <path d="M0 2q0-1 1-1h8l1.500 2H21v15H0z" fill="#ffd35c" />
          <path d="M0 1h10v3H0z" fill="#e0a010" />
          <path d="M4.500 19v-8h13.500v8h-4v-4.500H8.500V19z" fill="#3a93d9" />
        </Svg>
        <div className="h-[2px] w-10 bg-[#0078d7]" />
      </div>
      <Svg w={24} h={23} className="ml-[17px]">
        <path d="M0 7L12 0l12 7v2H0z" fill="#0a5ba8" />
        <path d="M2 8h20v8H2z" fill="#f6f8fa" />
        <path d="M0 7l12 8L24 7v16H0z" fill="#1f9be8" />
        <path d="M12 15l12-8v16z" fill="#3ccaf5" />
      </Svg>
      <Svg w={23} h={24} className="ml-[25px]">
        <defs>
          <linearGradient id="fox" x1="18" y1="2" x2="6" y2="24" gradientUnits="userSpaceOnUse">
            <stop stopColor="#ffe23c" /><stop offset=".45" stopColor="#ff8a22" /><stop offset="1" stopColor="#f5245c" />
          </linearGradient>
        </defs>
        <path d="M0 12Q0 7 3 4.500L4 7l2-3 1.500 3h4Q11 3 15 0q1 3 4.500 6 3.500 3 3.500 7c0 6-5 10.500-11.500 10.500S0 18.500 0 12z" fill="url(#fox)" />
        <circle cx="11.500" cy="12.500" r="5" fill="#7b3fd0" />
        <path d="M3 8q5-1 9 1.500-3 1-5 3z" fill="#ff9a2a" />
      </Svg>
      <div className="ml-[18px] flex h-10 w-10 flex-col items-center justify-between pt-[8px]">
        <Svg w={20} h={24}>
          <path d="M11 1q0-1 1-1h7v24h-8z" fill="#dba010" />
          <path d="M5.500 7q0-1 1-1H14v18H5.500z" fill="#efc43a" />
          <path d="M.5 13q0-1 1-1h7v12h-7q-1 0-1-1z" fill="#f7dc6c" />
        </Svg>
        <div className="flex h-[2px] w-10">
          <div className="w-8 bg-[#0078d7]" />
          <div className="w-2 bg-[#6aaae0]" />
        </div>
      </div>
      <Svg w={24} h={20} className="mb-px ml-[261px]">
        <defs>
          <linearGradient id="haze" x1="0" y1="0" x2="0" y2="1">
            <stop stopColor="#ffc61a" /><stop offset="1" stopColor="#ee7420" />
          </linearGradient>
        </defs>
        <circle cx="12" cy="10" r="10" fill="url(#haze)" />
        <path d="M2 8.500h8M13 5h9M11 12h8M3 15.500h7" stroke="#fbe9c8" strokeWidth="1.200" />
        <path d="M2 6h7M1 11.500h7M15 8.500h7M13 15.500h7" stroke="#f79a1c" strokeWidth="1.600" strokeLinecap="round" />
      </Svg>
      <T w={28} className="ml-[9px] mt-[2px] text-[13.300px]">16°C</T>
      <T w={31} className="ml-[9px] mt-[2px] text-[13.300px]">Haze</T>
      <Svg w={12} h={7} className="ml-[28px]">
        <path d="M.5 6.500L6 1l5.500 5.500" stroke="#111" strokeWidth="1.300" />
      </Svg>
      <Svg w={12} h={16} className="ml-[20px]">
        <path d="M2.500 2Q6-.5 9.500 2M2.500 14Q6 16.500 9.500 14" stroke="#111" strokeWidth="1.200" />
        <path d="M.7 4.500h7.600v7H.7zM8.500 7l3-2v6l-3-2" stroke="#111" strokeWidth="1.300" />
      </Svg>
      <Svg w={16} h={12} className="ml-[18px]">
        <path d="M5.500 3.500h9v7H4.500V8M1.500.500v3.500q0 1.500 1.500 1.500t1.500-1.500V.5M0 2.500h6M3 5.500V10" stroke="#111" strokeWidth="1.200" />
        <path d="M6.500 5h6.500v4H6.500zM15 5.500h1v3h-1z" fill="#111" />
      </Svg>
      <Svg w={17} h={17} className="ml-[16px]">
        <path d="M9 15.500A7.200 7.200 0 1 1 15.200 8M8 .8Q4.500 4 4.500 8T8 15.500M8 .8Q11.500 4 11.500 8M1 5.500h13.500M1 10.500h8M8 .8v9" stroke="#111" strokeWidth="1.100" />
        <circle cx="12.700" cy="12.700" r="3.500" stroke="#111" strokeWidth="1.200" />
        <path d="M10.500 10.500l4.500 4.500" stroke="#111" />
      </Svg>
      <Svg w={17} h={13} className="ml-[15px]">
        <path d="M.7 4.500H3l3.500-3.500v11L3 8.500H.7z" stroke="#111" strokeWidth="1.200" />
        <path d="M8.500 4.500q1.500 2 0 4M11 2.500q3 4 0 8" stroke="#111" strokeWidth="1.200" />
        <path d="M13.500.5q4.500 6 0 12" stroke="#8a93a0" strokeWidth="1.200" />
      </Svg>
      <Svg w={17} h={16} className="ml-[19px]">
        <path d="M5.500 11L12 2q1.500-2 2.500-.5T14 4.500L7 13l-2.500.5zM3 8Q-.5 11 1 13.500T7 13q2-2 2.500-4.500M10 6q3 5 5.500 1" stroke="#111" strokeWidth="1.200" />
      </Svg>
      <T w={23} className="ml-[17px] text-[11.700px]">ENG</T>
      <div className="mb-px ml-[13px] flex w-[58px] flex-col items-center">
        <T w={28} className="text-[11.700px] leading-[18px]">22:55</T>
        <T w={58} className="text-[11.700px] leading-[18px]">23-01-2024</T>
      </div>
      <Svg w={24} h={24} className="ml-[18px] mt-1">
        <path d="M0 0h16v12.500H5l-3 4v-4H0z" fill="#000" />
        <path d="M3 3.500h10M3 6h10M3 8.500h7" stroke="#dfe3ee" />
        <circle cx="15.500" cy="15.500" r="8" fill="#c9cbd0" stroke="#8b8d92" fillOpacity=".85" />
        <text x="15.500" y="19.500" fontSize="11" fontWeight="600" fill="#222" textAnchor="middle">1</text>
      </Svg>
      <div className="ml-auto mr-[4px] h-10 w-px bg-[#a9b0bf]" />
    </div>
  );
}

export default function App() {
  return (
    <div className="flex h-[768px] w-[1366px] flex-col overflow-hidden bg-white font-['Open_Sans','Noto_Sans',sans-serif]">
      <TitleBar />
      <div className="z-10 flex shrink-0 flex-col bg-[#fafafa] shadow-[0_1px_4px_rgba(0,0,0,0.25)]">
        <MenuTabs />
        <Ribbon />
      </div>
      <div className="flex h-[543px] shrink-0">
        <Rail />
        <div className="flex w-[963px] shrink-0 flex-col">
          <div className="flex h-[508px] shrink-0">
            <div className="flex w-[762px] shrink-0 flex-col bg-white">
              <TreeMap />
              <div className="mx-[2px] mt-[53px] border-t-2 border-dotted border-[#484644]" />
            </div>
            <FiltersPane />
          </div>
          <PageBar />
        </div>
        <VisualizationsPane />
        <DataPane />
      </div>
      <StatusBar />
      <Taskbar />
    </div>
  );
}
